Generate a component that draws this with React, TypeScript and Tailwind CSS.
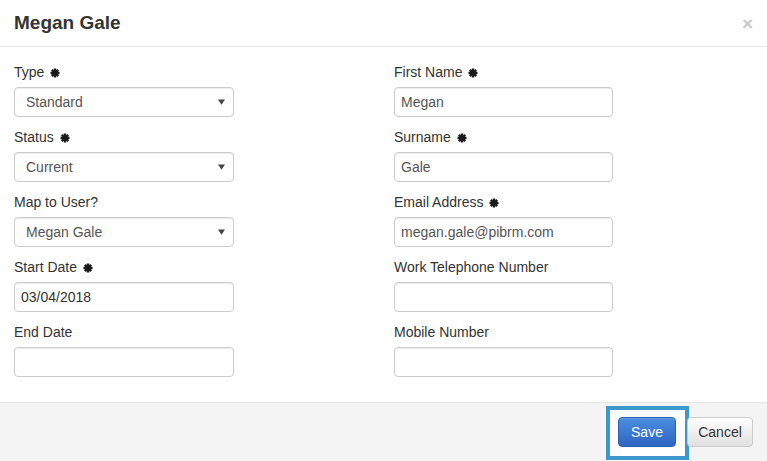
import type { ReactNode } from "react";

const Asterisk = () => (
  <svg viewBox="0 0 10 10" className="ml-[6px] inline-block h-[10px] w-[10px] align-[-1px]">
    <g stroke="#1a1a1a" strokeWidth="2.4" strokeLinecap="butt">
      <line x1="5" y1="0.5" x2="5" y2="9.5" />
      <line x1="0.5" y1="5" x2="9.5" y2="5" />
      <line x1="1.8" y1="1.8" x2="8.2" y2="8.2" />
      <line x1="8.2" y1="1.8" x2="1.8" y2="8.2" />
    </g>
  </svg>
);

type FieldProps = {
  label: string;
  required?: boolean;
  children: ReactNode;
};

function Field({ label, required, children }: FieldProps) {
  return (
    <div className="mb-[10px]">
      <label className="mb-[5px] block h-[20px] text-[14px] leading-[20px] text-[#333]">
        {label}
        {required ? <Asterisk /> : null}
      </label>
      {children}
    </div>
  );
}

const boxClass =
  "flex h-[30px] w-full items-center rounded-[4px] border border-[#ccc] bg-white text-[14px] shadow-[inset_0_1px_1px_rgba(0,0,0,0.075)]";

function SelectBox({ value }: { value: string }) {
  return (
    <div className={`${boxClass} justify-between pl-[11px] pr-[8px] text-[#555]`}>
      <span>{value}</span>
      <svg viewBox="0 0 8 6" className="h-[6px] w-[7px]">
        <path d="M0 0 H8 L4 6 Z" fill="#444" />
      </svg>
    </div>
  );
}

function TextBox({ value = "", dark }: { value?: string; dark?: boolean }) {
  return (
    <div className={`${boxClass} px-[6px] ${dark ? "text-[#333]" : "text-[#555]"}`}>
      {value}
    </div>
  );
}

export default function App() {
  return (
    <div
      className="h-[461px] w-[767px] overflow-hidden bg-white"
      style={{ fontFamily: '"Liberation Sans", Arial, sans-serif' }}
    >
      <div className="flex h-[47px] items-center justify-between border-b border-[#e5e5e5] pl-[14px] pr-[14px]">
        <h4 className="text-[19px] font-bold text-[#333]">Megan Gale</h4>
        <span className="text-[19px] font-bold leading-none text-[#c8c8c8]">×</span>
      </div>

      <div className="grid grid-cols-[220px_219px] gap-x-[160px] pb-[15px] pl-[14px] pt-[15px]">
        <div>
          <Field label="Type" required>
            <SelectBox value="Standard" />
          </Field>
          <Field label="Status" required>
            <SelectBox value="Current" />
          </Field>
          <Field label="Map to User?">
            <SelectBox value="Megan Gale" />
          </Field>
          <Field label="Start Date" required>
            <TextBox value="03/04/2018" dark />
          </Field>
          <Field label="End Date">
            <TextBox />
          </Field>
        </div>
        <div>
          <Field label="First Name" required>
            <TextBox value="Megan" />
          </Field>
          <Field label="Surname" required>
            <TextBox value="Gale" />
          </Field>
          <Field label="Email Address" required>
            <TextBox value="megan.gale@pibrm.com" />
          </Field>
          <Field label="Work Telephone Number">
            <TextBox />
          </Field>
          <Field label="Mobile Number">
            <TextBox />
          </Field>
        </div>
      </div>

      <div className="flex h-[59px] items-start justify-end border-t border-[#e5e5e5] bg-[#f4f4f4] pr-[14px] pt-[3px]">
        <div className="border-[4px] border-[#3f98cc] bg-white pb-[9px] pl-[8px] pr-[9px] pt-[7px]">
          <button className="h-[30px] w-[58px] rounded-[4px] border border-[#2c5fb5] bg-[linear-gradient(#4a8ee0,#2f64c2)] text-[14px] text-white shadow-[inset_0_1px_0_rgba(255,255,255,0.15)]">
            Save
          </button>
        </div>
        <button className="relative -ml-[2px] mt-[11px] h-[30px] w-[66px] rounded-[4px] border border-[#ccc] bg-[linear-gradient(#fff,#e0e0e0)] text-[14px] text-[#333] shadow-[inset_0_1px_0_rgba(255,255,255,0.15)]">
          Cancel
        </button>
      </div>
    </div>
  );
}
